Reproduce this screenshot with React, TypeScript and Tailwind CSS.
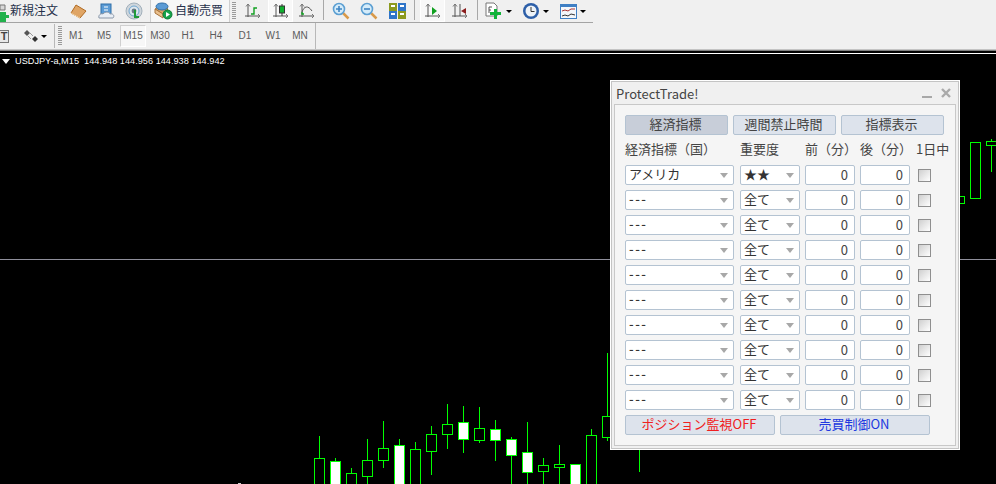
import React from "react";

const JP = "font-['Noto_Sans_CJK_JP','Noto_Sans',sans-serif]";

type C = [number, number, number, number, number, boolean];
const candles: C[] = [
  [319, 436, 458, 500, 500, false],
  [335, 458, 461, 500, 500, true],
  [351, 468, 473, 500, 500, false],
  [367, 439, 460, 476, 500, false],
  [383, 421, 448, 460, 468, false],
  [399, 439, 445, 500, 500, true],
  [415, 442, 449, 500, 500, false],
  [431, 426, 434, 451, 475, false],
  [447, 404, 424, 434, 449, false],
  [463, 406, 422, 439, 453, true],
  [479, 407, 428, 440, 443, false],
  [495, 420, 429, 440, 461, true],
  [511, 437, 439, 455, 500, true],
  [527, 422, 452, 472, 500, true],
  [543, 458, 465, 471, 500, false],
  [559, 445, 464, 467, 500, false],
  [575, 464, 464, 500, 500, true],
  [591, 429, 435, 500, 500, false],
  [607, 353, 416, 437, 441, false],
  [639, 450, 450, 450, 472, false],
  [960, 196, 196, 203, 203, false],
  [975, 142, 142, 198, 198, false],
  [991, 139, 141, 145, 172, false],
];

function Chart() {
  return (
    <svg className="absolute inset-0 h-full w-full" viewBox="0 54 996 430" shapeRendering="crispEdges">
      <line x1="0" x2="996" y1="259.5" y2="259.5" stroke="#8f8f9b" />
      {candles.map(([x, wt, bt, bb, wb, fill]) => (
        <g key={x} stroke="#00ff00" fill={fill ? "#ffffff" : "#000000"}>
          <line x1={x + 0.5} x2={x + 0.5} y1={wt} y2={wb} />
          {bb > bt && x !== 960 && <rect x={x - 4.5} y={bt + 0.5} width={10} height={bb - bt} />}
          {x === 960 && <rect x={958.5} y={196.5} width={6} height={7} />}
        </g>
      ))}
      <line x1="238" x2="241" y1="483.5" y2="483.5" stroke="#cfcfcf" />
    </svg>
  );
}

function Sep() {
  return <div className="mx-[2px] h-[20px] w-px shrink-0 bg-[#a8a8a8]" />;
}

function Grip({ h }: { h: string }) {
  return (
    <div
      className={`w-[4px] shrink-0 bg-[repeating-linear-gradient(to_bottom,#9a9a9a_0,#9a9a9a_1px,transparent_1px,transparent_2px)] ${h}`}
    />
  );
}

function Slot({ w, children, active }: { w: string; children?: React.ReactNode; active?: boolean }) {
  return (
    <div
      className={`flex h-[22px] shrink-0 items-center justify-center ${w} ${
        active ? "border-x border-b border-white bg-[#f8f8f8]" : ""
      }`}
    >
      {children}
    </div>
  );
}

function Caret() {
  return (
    <div className="ml-[3px] h-0 w-0 shrink-0 self-center border-x-[3px] border-t-[3px] border-x-transparent border-t-black" />
  );
}

function Axes({ children }: { children?: React.ReactNode }) {
  return (
    <svg width="16" height="16" viewBox="0 0 16 16">
      <path d="M3 1V14M0 13H15" stroke="#555" fill="none" />
      <path d="M1 3.5L3 1L5 3.5M13 11L15 13L13 15" stroke="#777" fill="none" />
      {children}
    </svg>
  );
}

function Magnifier({ plus }: { plus?: boolean }) {
  return (
    <svg width="18" height="18" viewBox="0 0 18 18">
      <path d="M11 11L16.5 16.5" stroke="#d99a4a" strokeWidth="2.5" />
      <circle cx="7" cy="7" r="5.5" fill="#d5ecfa" stroke="#5c9fd2" strokeWidth="1.6" />
      <path d={plus ? "M4 7H10M7 4V10" : "M4 7H10"} stroke="#3f85c4" strokeWidth="1.6" />
    </svg>
  );
}

function Toolbar1() {
  return (
    <div className="flex h-[23px] w-[593px] items-start border-b border-[#a4a4a4] bg-[#f0f0f0]">
      <div className="relative flex h-[22px] w-[62px] shrink-0 items-center pb-[2px] pl-[10px]">
        <svg className="absolute left-0 top-[4px]" width="9" height="18" viewBox="0 0 9 18">
          <path d="M0 1H5V6H0Z" fill="#d8d8d8" stroke="#777" />
          <path d="M3 8H6V11H9V14H6V18H0V8Z" fill="#22b14c" />
        </svg>
        <span className={`${JP} whitespace-nowrap text-[12px] leading-none text-[#26304a]`}>新規注文</span>
      </div>
      <Slot w="w-[32px]">
        <svg width="17" height="15" viewBox="0 0 17 15">
          <path d="M6 1L16 7L10 14L1 9Z" fill="#e0a565" stroke="#b06a22" />
          <path d="M1 9L10 14" stroke="#f6d6a8" />
        </svg>
      </Slot>
      <Slot w="w-[24px]">
        <svg width="17" height="17" viewBox="0 0 17 17">
          <rect x="3" y="1" width="10" height="10" fill="#5b9bd5" stroke="#2f6ea8" />
          <path d="M6 4H10M6 7H10" stroke="#fff" />
          <path d="M1 15C0 12 3 10 5 11C7 8 12 9 12 11C15 10 17 13 15 15Z" fill="#e8eef5" stroke="#8a97a8" />
        </svg>
      </Slot>
      <Slot w="w-[32px]">
        <svg width="18" height="18" viewBox="0 0 18 18">
          <circle cx="9" cy="9" r="8" fill="#cfd6dc" stroke="#a2b0bb" />
          <circle cx="9" cy="9" r="5" fill="#dfe8ef" stroke="#6ea6d0" />
          <circle cx="9" cy="9" r="2.4" fill="#6a7a86" />
          <path d="M10 8V16" stroke="#1f9a3a" strokeWidth="2" />
          <path d="M10 15H14" stroke="#1f9a3a" strokeWidth="2" />
        </svg>
      </Slot>
      <div className="flex h-[22px] w-[80px] shrink-0 items-center gap-[2px] border-x border-[#cfcfcf] bg-[#f7f7f7] pl-[3px]">
        <svg width="19" height="18" viewBox="0 0 19 18">
          <path d="M1 7L9 12L14 7L8 3Z" fill="#e0a565" stroke="#a8743c" />
          <ellipse cx="8" cy="4.5" rx="6" ry="3.5" fill="#5b9bd5" stroke="#2f6ea8" />
          <path d="M1 7V11L9 16V12Z" fill="#eac08e" stroke="#a8743c" />
          <circle cx="13.5" cy="12.5" r="4.5" fill="#16a34a" stroke="#0f7a36" />
          <path d="M12 10L16 12.5L12 15Z" fill="#fff" />
        </svg>
        <span className={`${JP} mb-[2px] whitespace-nowrap text-[12px] leading-none text-[#26304a]`}>自動売買</span>
      </div>
      <div className="ml-[2px] flex h-[22px] w-[6px] shrink-0 items-center">
        <Grip h="h-[18px]" />
      </div>
      <Slot w="w-[30px]">
        <Axes>
          <path d="M6 11H9V5H12" stroke="#10a020" fill="none" strokeWidth="1.4" />
        </Axes>
      </Slot>
      <Slot w="w-[25px]" active>
        <Axes>
          <path d="M9 1V13" stroke="#333" />
          <rect x="6.5" y="3" width="5" height="7" fill="#10b030" stroke="#333" />
        </Axes>
      </Slot>
      <Slot w="w-[28px]">
        <Axes>
          <path d="M3 9C5 3 9 2 13 8" stroke="#555" fill="none" />
          <path d="M3 9L3 11L5 11" stroke="#10a020" fill="none" strokeWidth="1.4" />
        </Axes>
      </Slot>
      <Sep />
      <div className="w-[6px] shrink-0" />
      <Slot w="w-[18px]">
        <Magnifier plus />
      </Slot>
      <div className="w-[10px] shrink-0" />
      <Slot w="w-[18px]">
        <Magnifier />
      </Slot>
      <div className="w-[11px] shrink-0" />
      <Slot w="w-[17px]">
        <svg width="17" height="16" viewBox="0 0 17 16">
          <rect x="0" y="0" width="8" height="8" fill="#8c9a1f" />
          <rect x="9" y="0" width="8" height="8" fill="#2f75c9" />
          <rect x="0" y="8" width="8" height="8" fill="#2f75c9" />
          <rect x="9" y="8" width="8" height="8" fill="#8c9a1f" />
          <path d="M2 3H6M11 3H15M2 11H6M11 11H15" stroke="#fff" strokeWidth="2" />
        </svg>
      </Slot>
      <div className="w-[6px] shrink-0" />
      <Sep />
      <div className="w-[3px] shrink-0" />
      <Slot w="w-[25px]" active>
        <Axes>
          <path d="M7 4L12 8L7 12Z" fill="#10a020" />
        </Axes>
      </Slot>
      <div className="w-[7px] shrink-0" />
      <Slot w="w-[16px]">
        <Axes>
          <path d="M8 1V13" stroke="#555" />
          <path d="M9 8L14 5V11Z" fill="#8a1c1c" />
        </Axes>
      </Slot>
      <div className="w-[7px] shrink-0" />
      <Sep />
      <div className="w-[5px] shrink-0" />
      <Slot w="w-[18px]">
        <svg width="18" height="18" viewBox="0 0 18 18">
          <path d="M1 1H9L12 4V14H1Z" fill="#fff" stroke="#777" />
          <path d="M4 5H7M4 5V11M4 8H6" stroke="#555" fill="none" />
          <path d="M9 7H12V10H16V13H12V17H9V13H5V10H9Z" fill="#12b33a" />
        </svg>
      </Slot>
      <Caret />
      <div className="w-[10px] shrink-0" />
      <Slot w="w-[18px]">
        <svg width="18" height="18" viewBox="0 0 18 18">
          <circle cx="9" cy="9" r="8" fill="#2d5fa8" />
          <circle cx="9" cy="9" r="5.5" fill="#eef3f8" />
          <path d="M9 5V9.5H12.5" stroke="#333" fill="none" />
        </svg>
      </Slot>
      <Caret />
      <div className="w-[10px] shrink-0" />
      <Slot w="w-[18px]">
        <svg width="17" height="15" viewBox="0 0 17 15">
          <rect x="0.5" y="0.5" width="16" height="14" fill="#f4f7fb" stroke="#3f7fc4" />
          <rect x="1" y="1" width="15" height="2" fill="#3f7fc4" />
          <path d="M2 7L5 6L8 7L11 5L15 5" stroke="#a33" fill="none" />
          <path d="M2 12L5 11L8 12L11 10L15 11" stroke="#333" fill="none" />
        </svg>
      </Slot>
      <Caret />
    </div>
  );
}

const periods = [
  ["M1", "w-[28px]"],
  ["M5", "w-[28px]"],
  ["M15", "ml-[2px] w-[26px]"],
  ["M30", "w-[28px]"],
  ["H1", "w-[28px]"],
  ["H4", "w-[28px]"],
  ["D1", "w-[30px]"],
  ["W1", "w-[26px]"],
  ["MN", "w-[28px]"],
];

function Toolbar2() {
  return (
    <div className="flex h-[26px] items-center bg-[#f0f0f0]">
      <div className="flex h-full w-[16px] shrink-0 items-center">
        <div className="flex h-[13px] w-[9px] items-center justify-center border-y border-r border-[#777] bg-[#e8e8e8] font-['Liberation_Sans'] text-[11px] font-bold leading-none text-[#444]">
          T
        </div>
      </div>
      <div className="flex w-[38px] shrink-0 items-center pl-[8px]">
        <svg width="14" height="14" viewBox="0 0 14 14">
          <path d="M0 4L3 1L6 4L3 7Z" fill="#555" />
          <path d="M4 7L7 10M6 4L9 7" stroke="#999" />
          <path d="M8 10L11 7L14 10L11 13Z" fill="#333" />
        </svg>
        <div className="ml-[3px] h-0 w-0 border-x-[3px] border-t-[3px] border-x-transparent border-t-black" />
      </div>
      <div className="h-[24px] w-px shrink-0 bg-[#b8b8b8]" />
      <div className="ml-[3px]">
        <Grip h="h-[20px]" />
      </div>
      {periods.map(([p, w]) => (
        <div
          key={p}
          className={`flex h-[22px] shrink-0 items-center justify-center font-['Liberation_Sans'] text-[10px] leading-none text-[#5c5c5c] ${w} ${
            p === "M15" ? "border border-[#d0d0d0] border-r-white border-b-white bg-[#f7f7f7]" : ""
          }`}
        >
          {p}
        </div>
      ))}
      <div className="ml-px h-[26px] w-px shrink-0 bg-[#b8b8b8]" />
    </div>
  );
}

function Arrow() {
  return <div className="h-0 w-0 border-x-[4px] border-t-[5px] border-x-transparent border-t-[#a8a8a8]" />;
}

function SelectBox({ value, w }: { value: string; w: string }) {
  return (
    <div
      className={`flex h-[20px] shrink-0 items-center justify-between rounded-[2px] border border-[#b4c3d2] bg-white pl-[3px] pr-[5px] ${w}`}
    >
      <span
        className={`${JP} mb-[3px] whitespace-nowrap text-[13px] leading-none text-[#333] ${
          value === "---" ? "font-medium tracking-[1.5px]" : ""
        }`}
      >
        {value}
      </span>
      <Arrow />
    </div>
  );
}

function NumBox() {
  return (
    <div className="flex h-[20px] w-[50px] shrink-0 items-center justify-end rounded-[2px] border border-[#b4c3d2] bg-white pr-[6px]">
      <span className={`${JP} mb-[2px] text-[13px] leading-none text-[#444]`}>0</span>
    </div>
  );
}

function Row({ country, level }: { country: string; level: string }) {
  return (
    <div className="flex h-[20px] items-center">
      <SelectBox value={country} w="w-[109px]" />
      <div className="w-[6px] shrink-0" />
      <SelectBox value={level} w="w-[60px]" />
      <div className="w-[5px] shrink-0" />
      <NumBox />
      <div className="w-[5px] shrink-0" />
      <NumBox />
      <div className="w-[8px] shrink-0" />
      <div className="h-[13px] w-[13px] shrink-0 border border-[#8f8f8f] bg-[linear-gradient(135deg,#cfcfcf,#ffffff)]" />
    </div>
  );
}

function Btn({ label, active, w, color }: { label: string; active?: boolean; w: string; color?: string }) {
  return (
    <div
      className={`${JP} flex h-[20px] shrink-0 items-center justify-center whitespace-nowrap rounded-[2px] border border-[#b4c3d2] pb-[3px] pr-[2px] text-[13px] leading-none ${w} ${
        active ? "bg-[#c8ced9]" : "bg-[#dde3ec]"
      } ${color ?? "text-[#444]"}`}
    >
      {label}
    </div>
  );
}

function Panel() {
  const rows = Array.from({ length: 9 });
  return (
    <div className="absolute left-[610px] top-[26px] flex h-[370px] w-[350px] flex-col border border-white bg-[#f0f0f0]">
      <div className="flex h-[23px] shrink-0 items-center justify-between border border-b-0 border-[#c4c4c4] pl-[4px] pr-[7px]">
        <span className={`${JP} text-[13px] leading-none text-[#444]`}>ProtectTrade!</span>
        <div className="flex items-center gap-[9px]">
          <div className="mt-[7px] h-[2px] w-[10px] bg-[#a8a8a8]" />
          <svg width="10" height="10" viewBox="0 0 10 10">
            <path d="M1 1L9 9M9 1L1 9" stroke="#aaaaaa" strokeWidth="2.4" />
          </svg>
        </div>
      </div>
      <div className="flex flex-1 flex-col border-x border-b border-[#c4c4c4] p-[2px] pt-0">
        <div className="flex flex-1 flex-col border border-[#c8c8c8] bg-[#f5f5f5] pl-[10px] pt-[10px]">
          <div className="flex gap-[5px]">
            <Btn label="経済指標" active w="w-[103px]" />
            <Btn label="週間禁止時間" w="w-[103px]" />
            <Btn label="指標表示" w="w-[103px]" />
          </div>
          <div className={`${JP} mt-[4px] flex h-[20px] items-center whitespace-nowrap pb-[2px] text-[13px] leading-none text-[#444]`}>
            <span className="w-[115px]">経済指標（国）</span>
            <span className="w-[65px]">重要度</span>
            <span className="w-[55px]">前（分）</span>
            <span className="w-[56px]">後（分）</span>
            <span>1日中</span>
          </div>
          <div className="mt-[6px] flex flex-col gap-[5px]">
            <Row country="アメリカ" level="★★" />
            {rows.map((_, i) => (
              <Row key={i} country="---" level="全て" />
            ))}
          </div>
          <div className="mt-[5px] flex gap-[5px]">
            <Btn label="ポジション監視OFF" w="w-[150px]" color="text-[#f02020]" />
            <Btn label="売買制御ON" w="w-[150px]" color="text-[#2038e0]" />
          </div>
        </div>
      </div>
    </div>
  );
}

export default function App() {
  return (
    <div className="flex h-[484px] w-[996px] flex-col overflow-hidden bg-black">
      <div className="shrink-0 bg-[#f0f0f0]">
        <Toolbar1 />
        <Toolbar2 />
        <div className="h-px bg-[#c4c4c4]" />
        <div className="h-px bg-[#808080]" />
      </div>
      <div className="h-[3px] shrink-0 border-b border-white bg-black" />
      <div className="relative flex-1">
        <Chart />
        <div className="absolute left-[2px] top-[2px] flex items-center gap-[5px] whitespace-nowrap font-['Liberation_Sans'] text-[9.2px] leading-[11px] text-white">
          <div className="h-0 w-0 border-x-[4px] border-t-[5px] border-x-transparent border-t-white" />
          <span>USDJPY-a,M15&nbsp;&nbsp;144.948 144.956 144.938 144.942</span>
        </div>
        <Panel />
      </div>
    </div>
  );
}
